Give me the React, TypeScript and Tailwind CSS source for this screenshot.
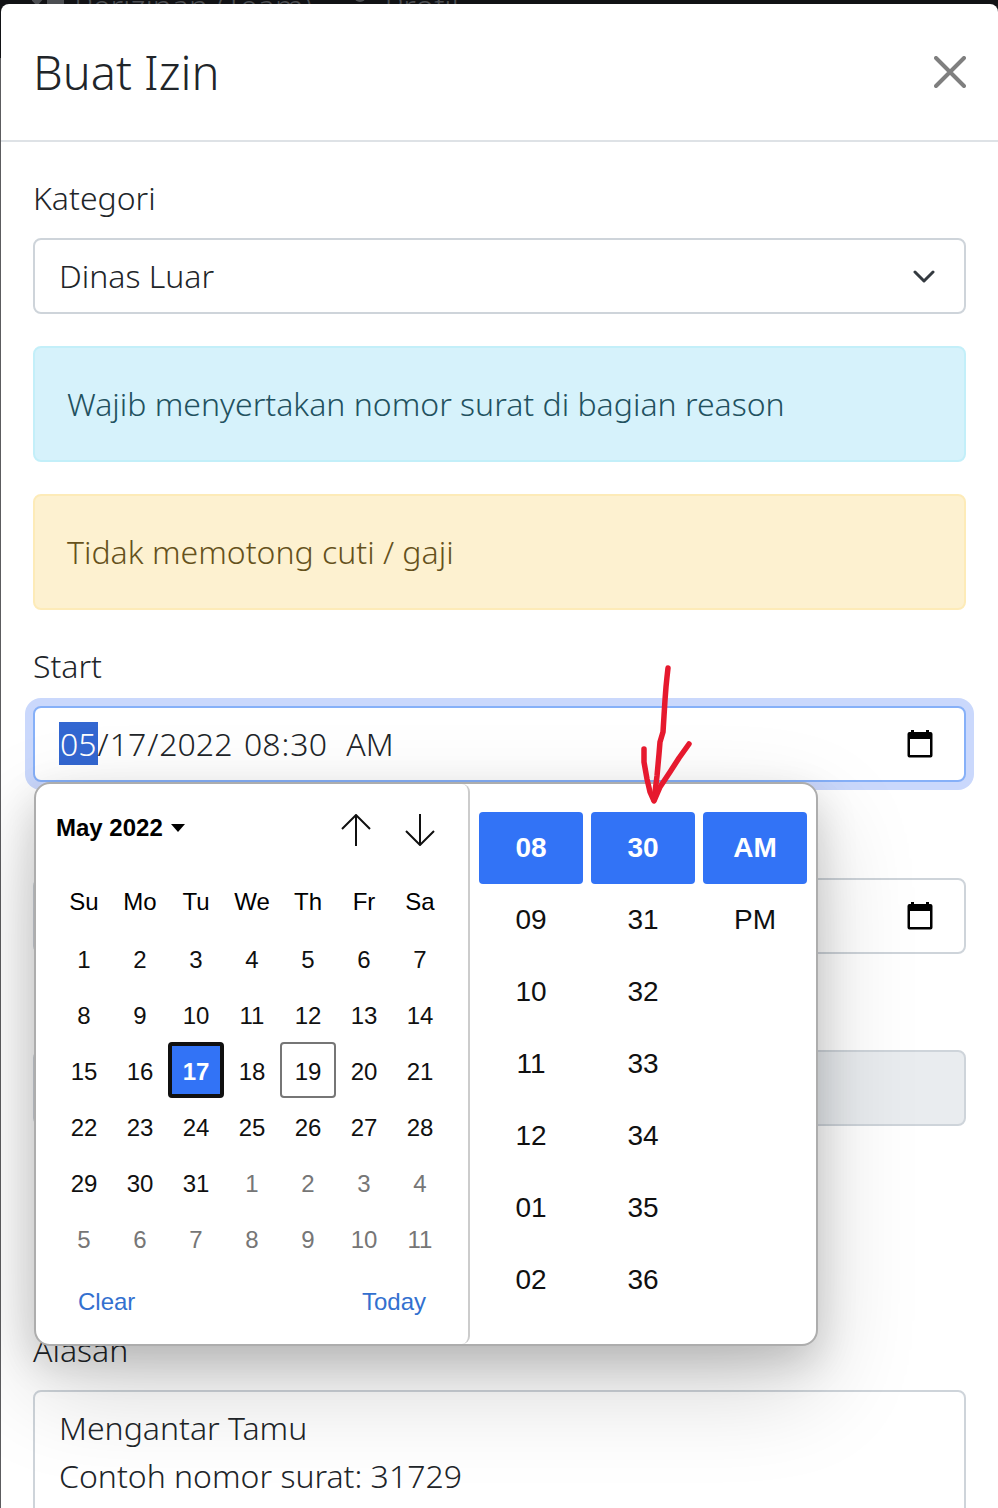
import { useEffect, useRef } from "react";
import type { ReactNode, Ref } from "react";

const weekdays = ["Su", "Mo", "Tu", "We", "Th", "Fr", "Sa"];
const weeks = [
  [1, 2, 3, 4, 5, 6, 7],
  [8, 9, 10, 11, 12, 13, 14],
  [15, 16, 17, 18, 19, 20, 21],
  [22, 23, 24, 25, 26, 27, 28],
  [29, 30, 31, 1, 2, 3, 4],
  [5, 6, 7, 8, 9, 10, 11],
];
const timeColumns = [
  { name: "Hour", values: ["08", "09", "10", "11", "12", "01", "02"] },
  { name: "Minute", values: ["30", "31", "32", "33", "34", "35", "36"] },
  { name: "Period", values: ["AM", "PM"] },
];

const dateInput =
  "leading-12 outline-none [&::-webkit-datetime-edit-fields-wrapper]:p-0 [&::-webkit-calendar-picker-indicator]:hidden [&::-webkit-datetime-edit-month-field:focus]:bg-[#3375d0] [&::-webkit-datetime-edit-month-field:focus]:text-white [&::-webkit-datetime-edit-ampm-field]:ml-3";

function dayClass(week: number, day: number) {
  if (week === 2 && day === 17)
    return "rounded border-4 border-[#101010] bg-[#3273f6] font-bold text-white";
  if (week === 2 && day === 19) return "rounded border-2 border-[#767676] text-[#101010]";
  if (week > 3 && day < 12) return "text-[#767676]";
  return "text-[#101010]";
}

function Field({ label, id, children }: { label: string; id: string; children: ReactNode }) {
  return (
    <div>
      <label htmlFor={id} className="mb-4 block">
        {label}
      </label>
      {children}
    </div>
  );
}

function CalendarIcon() {
  return (
    <svg
      className="pointer-events-none h-7 w-[26px] shrink-0"
      viewBox="0 0 26 28"
      aria-hidden="true"
    >
      <path
        fillRule="evenodd"
        d="M4 0h3v2h12V0h3v2h1.500a2 2 0 0 1 2 2v21.500a2 2 0 0 1-2 2h-21a2 2 0 0 1-2-2V4a2 2 0 0 1 2-2H4zM3 9v16h20V9z"
      />
    </svg>
  );
}

function DateTimeInput({
  id,
  date,
  time,
  inputRef,
}: {
  id: string;
  date: string;
  time: string;
  inputRef?: Ref<HTMLInputElement>;
}) {
  return (
    <div className="flex h-19 items-center rounded-lg border-2 border-[#ced4da] bg-white pr-[31px] pl-6 focus-within:border-[#86b0f8] focus-within:ring-8 focus-within:ring-[#cad8fc]">
      <input ref={inputRef} id={id} type="date" defaultValue={date} className={dateInput + " mr-2 w-44"} />
      <input type="time" aria-label="Time" defaultValue={time} className={dateInput + " min-w-0 flex-1"} />
      <CalendarIcon />
    </div>
  );
}

function Arrow({ down = false }: { down?: boolean }) {
  return (
    <svg viewBox="0 0 32 32" className="size-8" fill="none" stroke="#101010" strokeWidth="2" aria-hidden="true">
      <path d={down ? "M16 0v31M2 17l14 14 14-14" : "M16 32V1M2 15 16 1l14 14"} />
    </svg>
  );
}

function Picker() {
  return (
    <div
      role="dialog"
      aria-label="Choose date and time"
      className="absolute top-full left-px z-10 flex h-[564px] w-[784px] rounded-2xl border-2 border-[#adadad] bg-white font-['Liberation_Sans',Arial,sans-serif] text-2xl font-normal text-black shadow-[0_16px_40px_rgba(0,0,0,0.16),0_40px_100px_rgba(0,0,0,0.18)]"
    >
      <div className="w-[434px] rounded-2xl rounded-r-lg border-r-2 border-[#ccc] px-5 pt-[26px]">
        <div className="mb-6 flex items-center justify-between">
          <button type="button" className="flex items-center gap-2 font-bold">
            May 2022
            <svg viewBox="0 0 14 8" className="h-2 w-3.5" aria-hidden="true">
              <path d="M0 0h14L7 8z" />
            </svg>
          </button>
          <div className="flex gap-8 pt-1 pr-3">
            <button type="button" aria-label="Previous month">
              <Arrow />
            </button>
            <button type="button" aria-label="Next month">
              <Arrow down />
            </button>
          </div>
        </div>
        <table className="w-full table-fixed border-collapse text-center">
          <thead>
            <tr>
              {weekdays.map((d) => (
                <th key={d} scope="col" className="h-15 p-0 pt-1 font-normal">
                  {d}
                </th>
              ))}
            </tr>
          </thead>
          <tbody>
            {weeks.map((week, w) => (
              <tr key={w}>
                {week.map((day) => (
                  <td key={day} className="h-14 p-0">
                    <button type="button" className={"block size-14 pt-1 leading-none " + dayClass(w, day)}>
                      {day}
                    </button>
                  </td>
                ))}
              </tr>
            ))}
          </tbody>
        </table>
        <div className="mt-5 flex justify-between px-[22px] text-[#3370cf]">
          <button type="button">Clear</button>
          <button type="button">Today</button>
        </div>
      </div>
      <div className="grid flex-1 grid-cols-3 items-start gap-2 px-[9px] pt-7 text-[28px]">
        {timeColumns.map((col) => (
          <div key={col.name} role="group" aria-label={col.name} className="flex flex-col">
            {col.values.map((v, i) => (
              <button
                key={v}
                type="button"
                className={
                  i === 0
                    ? "h-18 rounded bg-[#3273f6] font-bold text-white"
                    : "h-18 rounded text-[#101010]"
                }
              >
                {v}
              </button>
            ))}
          </div>
        ))}
      </div>
      <svg
        viewBox="0 0 60 150"
        className="pointer-events-none absolute -top-[124px] right-[120px] h-[150px] w-15"
        fill="none"
        stroke="#e6192e"
        strokeWidth="5.500"
        strokeLinecap="round"
        strokeLinejoin="round"
        aria-hidden="true"
      >
        <path d="M32 8l-1 9-1 10-1 13-1 16-1 16-3 10-1 12-2 22-3 24" />
        <path d="M8 89v13l3 17 3 13 4 9 6-14 10-15 9-14 10-14" />
      </svg>
    </div>
  );
}

export default function App() {
  const start = useRef<HTMLInputElement>(null);
  useEffect(() => {
    start.current?.focus();
  }, []);

  return (
    <div className="relative h-screen overflow-hidden bg-[#5c5c5f] font-['Noto_Sans',sans-serif] text-[32px] leading-12 font-light text-[#212529]">
      <nav className="h-[58px] overflow-hidden bg-[#111215] text-[#4c4e52]">
        <div className="-mt-2.5 flex items-center gap-10 pl-8 leading-8">
          <a href="#perizinan" className="flex items-center gap-2.5">
            <svg viewBox="0 0 32 24" className="h-6 w-8" fill="none" stroke="currentColor" strokeWidth="4" aria-hidden="true">
              <path d="M1 5l4 4 7-8M15 8h17M15 18h17M2 18h7" />
            </svg>
            Perizinan (Team)
          </a>
          <a href="#profil" className="flex items-center gap-4">
            <svg viewBox="0 0 16 24" className="h-6 w-4" fill="currentColor" aria-hidden="true">
              <circle cx="8" cy="2" r="6" />
              <path d="M0 24c0-14 16-14 16 0z" />
            </svg>
            Profil
          </a>
        </div>
      </nav>

      <section
        role="dialog"
        aria-labelledby="title"
        className="absolute inset-x-0 top-1 ml-px min-h-full rounded-t-lg bg-white"
      >
        <header className="flex items-center justify-between border-b-2 border-[#dee2e6] p-8">
          <h1 id="title" className="text-[47px] leading-18">
            Buat Izin
          </h1>
          <button type="button" aria-label="Close">
            <svg viewBox="0 0 32 32" className="size-8" fill="none" stroke="#7f7f7f" strokeWidth="4" strokeLinecap="round" aria-hidden="true">
              <path d="M2 2l28 28M30 2 2 30" />
            </svg>
          </button>
        </header>

        <form className="flex flex-col gap-8 p-8">
          <Field label="Kategori" id="kategori">
            <div className="relative">
              <select
                id="kategori"
                defaultValue="Dinas Luar"
                className="block h-19 w-full appearance-none rounded-lg border-2 border-[#ced4da] bg-white px-6 leading-12 outline-none"
              >
                <option>Dinas Luar</option>
              </select>
              <svg
                viewBox="0 0 22 13"
                className="pointer-events-none absolute top-8 right-[31px] h-[13px] w-[22px]"
                fill="none"
                stroke="#343a40"
                strokeWidth="3"
                strokeLinecap="round"
                strokeLinejoin="round"
                aria-hidden="true"
              >
                <path d="M2 2l9 9 9-9" />
              </svg>
            </div>
          </Field>

          <p className="rounded-lg border-2 border-[#c3eff9] bg-[#d6f2fb] p-8 text-[#22515f]">
            Wajib menyertakan nomor surat di bagian reason
          </p>
          <p className="rounded-lg border-2 border-[#fdebb8] bg-[#fdf1d0] p-8 text-[#65511c]">
            Tidak memotong cuti / gaji
          </p>

          <Field label="Start" id="start">
            <div className="relative">
              <DateTimeInput inputRef={start} id="start" date="2022-05-17" time="08:30" />
              <Picker />
            </div>
          </Field>
          <Field label="End" id="end">
            <DateTimeInput id="end" date="2022-05-17" time="17:00" />
          </Field>
          <Field label="Durasi" id="durasi">
            <input
              id="durasi"
              disabled
              className="block h-19 w-full rounded-lg border-2 border-[#ced4da] bg-[#e9ecef] px-6"
            />
          </Field>
          <div className="mt-42">
            <Field label="Alasan" id="alasan">
              <textarea
                id="alasan"
                rows={4}
                defaultValue={"Mengantar Tamu\nContoh nomor surat: 31729"}
                className="block w-full resize-none rounded-lg border-2 border-[#ced4da] bg-white px-6 py-3 outline-none"
              />
            </Field>
          </div>
        </form>
      </section>
    </div>
  );
}
